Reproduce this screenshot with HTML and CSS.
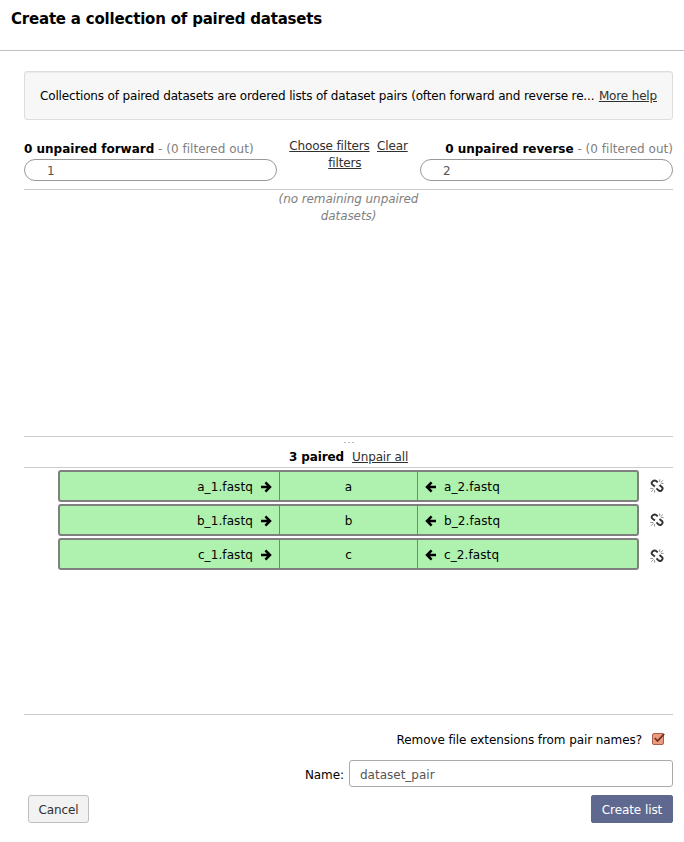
FILE: index.html
```html
<!DOCTYPE html>
<html lang="en">
<head>
<meta charset="utf-8">
<title>Create a collection of paired datasets</title>
<link rel="stylesheet" href="styles.css">
</head>
<body>
<svg class="symbols" aria-hidden="true">
  <symbol id="arrow" viewBox="0 0 12 12"><path d="M1 6H9.5M5.4 1.4L10 6L5.4 10.6" fill="none" stroke="#000" stroke-width="2.5"/></symbol>
  <symbol id="unlink" viewBox="0 0 14 14">
    <path d="M7.7 3.4L6.2 2Q4.5.9 2.8 2.2Q.9 3.8 2.2 5.4L4.9 7.6M6.5 9.4L8.4 11.3Q9.9 12.7 11.5 11.4Q13.4 9.8 12.1 8.2L9.5 6" fill="none" stroke="#333" stroke-width="1.9"/>
    <path d="M9.7.3V3M12.8 1.3L10.8 3.5M13.6 4.4H11M.4 9.5H3.2M1.2 12.7L3.5 10.4M4.6 13.7V11" fill="none" stroke="#777" stroke-width=".8"/>
  </symbol>
</svg>
<header class="header"><h1>Create a collection of paired datasets</h1></header>
<main class="creator">
  <div class="help"><p>Collections of paired datasets are ordered lists of dataset pairs (often forward and reverse re...</p><a>More help</a></div>
  <section class="filters">
    <div class="column"><div class="title"><b>0 unpaired forward</b> <span>- (0 filtered out)</span></div><input class="search" value="1"></div>
    <div class="links"><div><a>Choose filters</a>&nbsp; <a>Clear</a></div><div><a>filters</a>&nbsp;&nbsp;</div></div>
    <div class="column reverse"><div class="title"><b>0 unpaired reverse</b> <span>- (0 filtered out)</span></div><input class="search" value="2"></div>
  </section>
  <section class="unpaired"><p>(no remaining unpaired datasets)</p></section>
  <section class="paired-head"><div class="grip"><i></i><i></i><i></i></div><div class="paired-title"><b>3 paired</b><a>Unpair all</a></div></section>
  <section class="paired">
    <div class="row"><div class="pair"><div class="forward">a_1.fastq<svg><use href="#arrow"/></svg></div><div class="name">a</div><div class="back"><svg><use href="#arrow"/></svg>a_2.fastq</div></div><svg class="unlink"><use href="#unlink"/></svg></div>
    <div class="row"><div class="pair"><div class="forward">b_1.fastq<svg><use href="#arrow"/></svg></div><div class="name">b</div><div class="back"><svg><use href="#arrow"/></svg>b_2.fastq</div></div><svg class="unlink"><use href="#unlink"/></svg></div>
    <div class="row last"><div class="pair"><div class="forward">c_1.fastq<svg><use href="#arrow"/></svg></div><div class="name">c</div><div class="back"><svg><use href="#arrow"/></svg>c_2.fastq</div></div><svg class="unlink"><use href="#unlink"/></svg></div>
  </section>
  <footer>
    <div class="option"><span>Remove file extensions from pair names?</span><svg viewBox="0 0 14 14"><rect x="1.5" y="1.5" width="11" height="11" rx="1.5" fill="#ec9b7c" stroke="#a65f48"/><path d="M3.8 6L6.5 9L13.2 1.8" fill="none" stroke="#6b3020" stroke-width="1.7"/></svg></div>
    <div class="naming"><label for="name">Name:</label><input id="name" value="dataset_pair"></div>
    <div class="actions"><button class="cancel">Cancel</button><button class="create">Create list</button></div>
  </footer>
</main>
</body>
</html>
```
FILE: styles.css
```css
* { box-sizing: border-box; }
body { margin: 0; background: #fff; color: #000; font: 12px/17px "DejaVu Sans", sans-serif; letter-spacing: -.08px; }
.symbols { position: absolute; width: 0; height: 0; }
a { color: #303030; text-decoration: underline; }
b { font-size: 12px; letter-spacing: 0; }
input, button { font: inherit; letter-spacing: inherit; }
.header { height: 51px; border-bottom: 1px solid #bfbfbf; padding: 8px 11px; }
h1 { margin: 0; font: bold 15px/23px "DejaVu Sans", sans-serif; letter-spacing: -.2px; }
.creator { padding: 20px 11px 0 24px; }
.help { height: 49px; border: 1px solid #ddd; border-radius: 3px; background: #f7f7f7; box-shadow: inset 0 1px 1px #0000000d; padding: 2px 15px 0; display: flex; align-items: center; justify-content: space-between; white-space: nowrap; letter-spacing: -.155px; }
.help p { margin: 0; }
.filters { display: grid; grid-template-columns: 253px 1fr 253px; height: 70px; border-bottom: 1px solid #ccc; padding-top: 17px; }
.title { height: 22px; padding-top: 4px; white-space: nowrap; }
.title span { color: #808080; letter-spacing: .03px; }
.reverse .title { text-align: right; }
.search { display: block; width: 253px; height: 22px; border: 1px solid #999; border-radius: 11px; padding: 1px 22px 0; color: #555; }
.links { text-align: center; letter-spacing: -.14px; padding-top: 1px; }
.unpaired { height: 246px; }
.unpaired p { width: 160px; margin: 0 auto; padding-top: 1px; color: #808080; font-style: italic; text-align: center; }
.paired-head { height: 32px; border-top: 1px solid #ccc; border-bottom: 1px solid #ccc; }
.grip { display: flex; justify-content: center; gap: 2px; height: 12px; padding-top: 5px; }
.grip i { width: 2px; height: 1px; background: #bbb; }
.paired-title { display: flex; justify-content: center; gap: 8px; letter-spacing: -.15px; }
.paired-title b { letter-spacing: -.1px; }
.paired { height: 246px; padding: 2px 0 0 34px; }
.row { display: flex; align-items: center; gap: 11px; height: 32px; margin-bottom: 2px; }
.pair { display: grid; grid-template-columns: 220px 138px 1fr; width: 581px; height: 32px; border: 2px solid #808080; border-radius: 3px; background: #aff1af; line-height: 30px; letter-spacing: .1px; }
.pair svg { width: 12px; height: 12px; }
.forward, .back { display: flex; align-items: center; gap: 7px; height: 28px; padding-top: 2px; line-height: 18px; }
.forward { justify-content: flex-end; padding-right: 7px; border-right: 1px solid #808080; }
.name { height: 28px; text-align: center; border-right: 1px solid #808080; }
.back { padding-left: 7px; }
.back svg { transform: scaleX(-1); }
.unlink { width: 14px; height: 14px; margin-bottom: 1px; }
.last .unlink { margin: 3px 0 0; }
footer { border-top: 1px solid #ccc; padding-top: 17px; }
.option { display: flex; justify-content: flex-end; align-items: center; gap: 9px; padding-right: 8px; height: 17px; }
.option svg { width: 14px; height: 14px; margin-bottom: 3px; }
.naming { display: flex; justify-content: flex-end; align-items: center; gap: 5px; margin-top: 11px; }
.naming label { padding-top: 3px; }
.naming input { width: 324px; height: 27px; border: 1px solid #aaa; border-radius: 3px; padding: 2px 10px 0; color: #555; letter-spacing: 0; }
.actions { display: flex; justify-content: space-between; margin-top: 8px; padding-left: 4px; }
button { height: 28px; border: 1px solid #bfbfbf; border-radius: 3px; padding: 2px 0 0; }
.cancel { width: 61px; background: #f2f2f2; color: #303030; }
.create { width: 82px; border-color: #5f6990; border-radius: 2px; background: #5f6990; color: #fff; }
```
